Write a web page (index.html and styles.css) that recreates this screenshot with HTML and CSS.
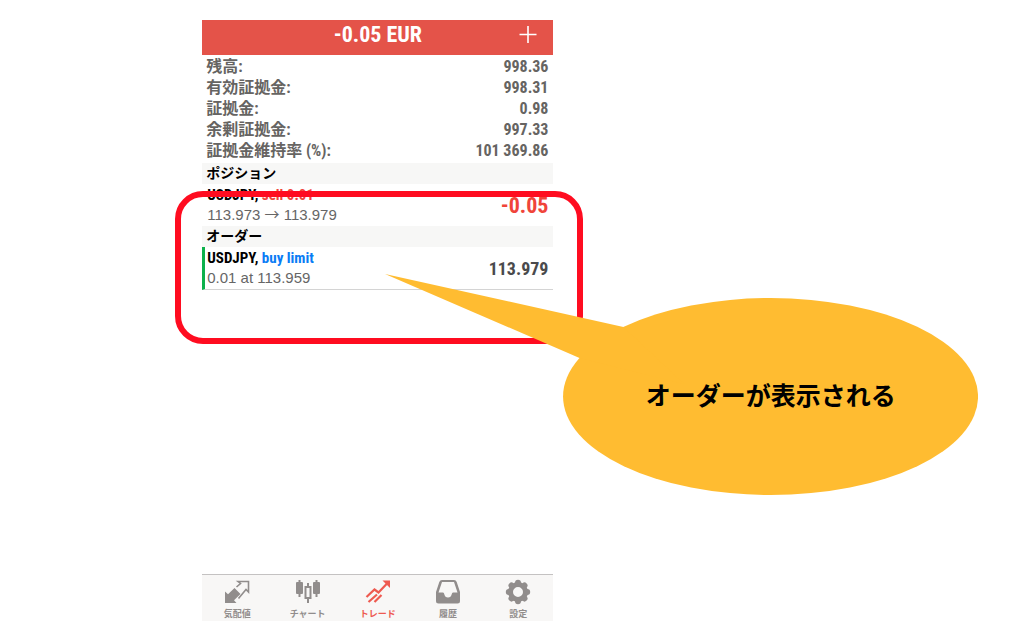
FILE: index.html
```html
<!DOCTYPE html>
<html lang="ja">
<head>
<meta charset="utf-8">
<meta name="viewport" content="width=device-width, initial-scale=1">
<title>トレード</title>
<link rel="stylesheet" href="styles.css">
</head>
<body>
<main class="phone">
  <header class="topbar">
    <h1 class="topbar-title">-0.05 EUR</h1>
    <button class="add" type="button" aria-label="追加"><svg width="18" height="18" viewBox="0 0 18 18"><path d="M9 0v17M0.500 8.500h17" stroke="#fff" stroke-width="1.600" fill="none"/></svg></button>
  </header>
  <dl class="summary">
    <div class="row"><dt>残高:</dt><dd>998.36</dd></div>
    <div class="row"><dt>有効証拠金:</dt><dd>998.31</dd></div>
    <div class="row"><dt>証拠金:</dt><dd>0.98</dd></div>
    <div class="row"><dt>余剰証拠金:</dt><dd>997.33</dd></div>
    <div class="row"><dt>証拠金維持率 (%):</dt><dd>101 369.86</dd></div>
  </dl>
  <h2 class="section">ポジション</h2>
  <article class="item">
    <div class="info">
      <p class="symbol">USDJPY, <span class="sell">sell 0.01</span></p>
      <p class="detail">113.973 <span class="arrow">→</span> 113.979</p>
    </div>
    <p class="profit">-0.05</p>
  </article>
  <h2 class="section">オーダー</h2>
  <article class="item item-order">
    <div class="info">
      <p class="symbol">USDJPY, <span class="buy">buy limit</span></p>
      <p class="detail">0.01 at 113.959</p>
    </div>
    <p class="price">113.979</p>
  </article>
  <nav class="tabs">
    <a class="tab" href="#quotes">
      <svg width="26" height="26" viewBox="0 0 26 26"><path d="M1 24V12.500l3 2.700 6.500-6.200 6 6-6.500 6.200L12.500 24z" fill="currentColor"/><path d="M12.500 8l4-3.500-2.500-2h10.500v10.500l-2.500-2.500-7.500 9" fill="none" stroke="currentColor" stroke-width="1.600"/></svg>
      <span>気配値</span></a>
    <a class="tab" href="#chart">
      <svg width="26" height="26" viewBox="0 0 26 26"><g fill="currentColor"><rect x="1" y="3" width="7" height="12" rx="1"/><rect x="18" y="3" width="7" height="12" rx="1"/></g><g fill="none" stroke="currentColor" stroke-width="2"><path d="M4.500 1v17M21.500 1v17M13 4v4M13 19v5"/><rect x="10.500" y="8" width="5" height="11"/></g></svg>
      <span>チャート</span></a>
    <a class="tab tab-active" href="#trade" aria-current="page">
      <svg width="26" height="26" viewBox="0 0 26 26"><g fill="none" stroke="currentColor" stroke-width="2.200"><path d="M1.500 18L9.500 10.500l4 3L22.500 4M3.500 23L12 15.500M9.500 23l7-7"/></g><path d="M17.500 1.500H25V9z" fill="currentColor"/></svg>
      <span>トレード</span></a>
    <a class="tab" href="#history">
      <svg width="26" height="26" viewBox="0 0 26 26"><path fill="currentColor" fill-rule="evenodd" d="M7 1h12q2 0 2.700 2L25 13v9q0 2.500-2.500 2.500h-19Q1 24.500 1 22v-9L4.300 3Q5 1 7 1zM7 3L3.500 13.500H8q1 0 1.200 1.500 .8 3.500 3.800 3.500t3.800-3.500Q17 13.500 18 13.500h4.500L19 3z"/></svg>
      <span>履歴</span></a>
    <a class="tab" href="#settings">
      <svg width="26" height="26" viewBox="0 0 26 26"><circle cx="13" cy="13" r="7.500" fill="none" stroke="currentColor" stroke-width="5"/><g stroke="currentColor" stroke-width="6" stroke-linecap="round"><path d="M13 3.800v1M13 21.200v1M3.800 13h1M21.200 13h1M6.500 6.500l.7.7M18.800 18.800l.7.7M6.500 19.500l.7-.7M18.800 7.200l.7-.7"/></g></svg>
      <span>設定</span></a>
  </nav>
  <div class="highlight"></div>
  <aside class="callout">
    <svg class="callout-shape" viewBox="0 0 595 222" preserveAspectRatio="none"><g fill="#ffbc31"><ellipse cx="386.500" cy="122.500" rx="208" ry="98.500"/><path d="M0 0L239 53 300 110 195 84z"/></g></svg>
    <p class="callout-text">オーダーが表示される</p>
  </aside>
</main>
</body>
</html>
```
FILE: styles.css
```css
* { box-sizing: border-box; }
body {
  margin: 0;
  background: #fff;
  color: #000;
  font-family: "Liberation Sans", "Noto Sans CJK JP", sans-serif;
}
h1, h2, p, dl, dd { margin: 0; }

.phone {
  position: relative;
  display: flex;
  flex-direction: column;
  width: 34.3%;
  min-height: calc(100vh - 35px);
  margin: 20px 0 15px 19.75%;
}

.topbar {
  display: grid;
  grid-template-columns: 1fr auto 1fr;
  align-items: center;
  height: 35px;
  padding: 0 16px 6px;
  background: #e45349;
  color: #fff;
}
.topbar-title {
  grid-column: 2;
  font: bold 22px/30px "Liberation Sans Narrow", "Roboto Condensed", "Liberation Sans", sans-serif;
}
.add {
  display: flex;
  justify-self: end;
  padding: 0;
  border: 0;
  background: none;
}

.summary { padding: 1px 5px 2px 4px; color: #666462; }
.row { display: flex; justify-content: space-between; line-height: 21px; }
.row dt {
  font-family: "Roboto Condensed", "Noto Sans CJK JP", sans-serif;
  font-size: 16px;
  font-weight: bold;
}
.row dd, .symbol, .profit, .price {
  font-family: "Liberation Sans Narrow", "Roboto Condensed", "Liberation Sans", sans-serif;
  font-weight: bold;
}
.row dd { font-size: 16px; }

.section {
  padding: 0 4px;
  background: #f7f7f6;
  font-size: 14px;
  line-height: 21px;
}
.item {
  display: flex;
  justify-content: space-between;
  align-items: center;
  height: 42px;
  padding: 0 5px;
}
.item-order {
  height: 43px;
  padding-left: 2px;
  border-left: 3px solid #0db14b;
  border-bottom: 1px solid #d4d4d4;
}
.symbol { font-size: 15px; line-height: 19px; }
.detail { color: #666; font-size: 15px; line-height: 19px; }
.arrow { font-family: "Noto Sans CJK JP", sans-serif; line-height: 1; }
.sell { color: #f0443a; }
.buy { color: #0a7cf5; }
.profit { color: #f0443a; font-size: 22px; }
.price { color: #4a4a4c; font-size: 18px; }

.tabs {
  display: flex;
  height: 47px;
  margin-top: auto;
  border-top: 1px solid #c4c2c2;
  background: #f8f7f6;
}
.tab {
  display: flex;
  flex: 1;
  flex-direction: column;
  align-items: center;
  padding-top: 4px;
  color: #918d8c;
  font-size: 9px;
  font-weight: bold;
  line-height: 19px;
  text-decoration: none;
}
.tab svg { flex: none; }
.tab-active { color: #ee5a50; }

.highlight {
  position: absolute;
  top: 171px;
  left: -27px;
  right: -30px;
  height: 153px;
  border: 6px solid #ff0c20;
  border-radius: 28px;
}
.callout {
  position: absolute;
  top: 254px;
  left: 52%;
  width: 169%;
  height: 222px;
}
.callout-shape { display: block; width: 100%; height: 100%; }
.callout-text {
  position: absolute;
  top: 24px;
  right: 0;
  width: 70%;
  font-size: 25px;
  font-weight: bold;
  line-height: 196px;
  text-align: center;
}
```
